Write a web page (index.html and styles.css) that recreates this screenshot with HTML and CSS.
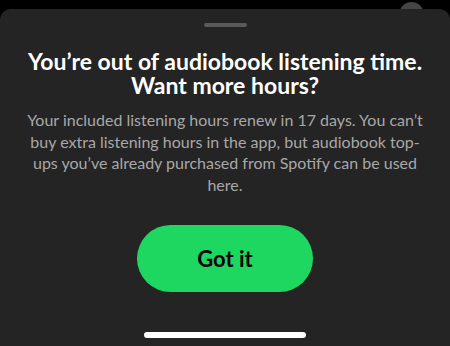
FILE: index.html
```html
<!DOCTYPE html>
<html lang="en">
<head>
<meta charset="utf-8">
<link rel="stylesheet" href="styles.css">
</head>
<body>
<div class="screen">
  <div class="avatar"></div>
  <div class="sheet">
    <div class="grabber"></div>
    <h1 class="title">You’re out of audiobook listening time.<br>Want more hours?</h1>
    <p class="body">Your included listening hours renew in 17 days. You can’t<br>buy extra listening hours in the app, but audiobook top-<br>ups you’ve already purchased from Spotify can be used<br>here.</p>
    <button class="cta">Got it</button>
    <div class="home"></div>
  </div>
</div>
</body>
</html>
```
FILE: styles.css
```css
html, body {
  margin: 0;
  padding: 0;
  background: #000;
}
.screen {
  position: relative;
  width: 450px;
  height: 346px;
  overflow: hidden;
  background: #000;
  font-family: Lato, "Noto Sans", sans-serif;
}
.avatar {
  position: absolute;
  left: 399px;
  top: 2px;
  width: 25px;
  height: 25px;
  border-radius: 50%;
  background: #454545;
}
.sheet {
  position: relative;
  margin-top: 9px;
  height: 337px;
  background: #242424;
  border-radius: 11px 11px 0 0;
  display: flex;
  flex-direction: column;
  align-items: center;
}
.grabber {
  margin-top: 14px;
  width: 43px;
  height: 4px;
  border-radius: 2px;
  background: #5a5a5a;
}
.title {
  margin: 22px 0 0;
  color: #fff;
  font-size: 23px;
  line-height: 24px;
  font-weight: 700;
  text-align: center;
  white-space: nowrap;
}
.body {
  margin: 12px 0 0;
  color: #a8a8a8;
  font-size: 16px;
  line-height: 21.5px;
  font-weight: 400;
  text-align: center;
  white-space: nowrap;
}
.cta {
  margin-top: 30px;
  width: 176px;
  height: 67px;
  border: 0;
  border-radius: 34px;
  background: #1ed760;
  color: #000;
  font-family: Lato, "Noto Sans", sans-serif;
  font-size: 22px;
  font-weight: 700;
  padding: 0;
}
.home {
  margin-top: 40px;
  width: 162px;
  height: 6px;
  border-radius: 3px;
  background: #fff;
}
```
